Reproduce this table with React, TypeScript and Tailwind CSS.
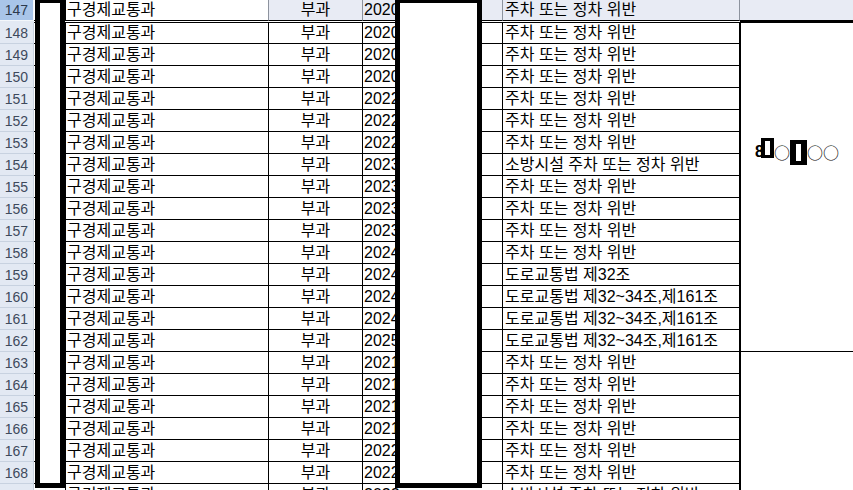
import React from "react";

type Row = { n: number; year: string; reason: string };

const rows: Row[] = [
  { n: 148, year: "2020", reason: "주차 또는 정차 위반" },
  { n: 149, year: "2020", reason: "주차 또는 정차 위반" },
  { n: 150, year: "2020", reason: "주차 또는 정차 위반" },
  { n: 151, year: "2022", reason: "주차 또는 정차 위반" },
  { n: 152, year: "2022", reason: "주차 또는 정차 위반" },
  { n: 153, year: "2022", reason: "주차 또는 정차 위반" },
  { n: 154, year: "2023", reason: "소방시설 주차 또는 정차 위반" },
  { n: 155, year: "2023", reason: "주차 또는 정차 위반" },
  { n: 156, year: "2023", reason: "주차 또는 정차 위반" },
  { n: 157, year: "2023", reason: "주차 또는 정차 위반" },
  { n: 158, year: "2024", reason: "주차 또는 정차 위반" },
  { n: 159, year: "2024", reason: "도로교통법 제32조" },
  { n: 160, year: "2024", reason: "도로교통법 제32~34조,제161조" },
  { n: 161, year: "2024", reason: "도로교통법 제32~34조,제161조" },
  { n: 162, year: "2025", reason: "도로교통법 제32~34조,제161조" },
  { n: 163, year: "2021", reason: "주차 또는 정차 위반" },
  { n: 164, year: "2021", reason: "주차 또는 정차 위반" },
  { n: 165, year: "2021", reason: "주차 또는 정차 위반" },
  { n: 166, year: "2021", reason: "주차 또는 정차 위반" },
  { n: 167, year: "2022", reason: "주차 또는 정차 위반" },
  { n: 168, year: "2022", reason: "주차 또는 정차 위반" },
  { n: 169, year: "2022", reason: "소방시설 주차 또는 정차 위반" },
];

const cell = "flex items-center overflow-hidden whitespace-nowrap border-b border-r border-black";
const rowHead =
  "flex items-center justify-end border-b border-r border-[#c8d2e0] bg-[#e3e9f3] pr-[5px] text-[14px] text-[#3e4a5c]";

function DataRow({ r }: { r: Row }) {
  return (
    <>
      <div className={rowHead}>{r.n}</div>
      <div className={cell} />
      <div className={`${cell} pl-[1px]`}>구경제교통과</div>
      <div className={`${cell} justify-center`}>부과</div>
      <div className={`${cell} pl-[1px]`}>{r.year}</div>
      <div className={`${cell} pl-[2px]`}>{r.reason}</div>
    </>
  );
}

function Masked() {
  return (
    <div className="flex flex-col items-center pt-[116px]">
      <div className="flex h-[26px] items-center text-[16px] text-black">
        <span className="font-bold">8</span>
        <span className="-ml-[3px] mb-[9px] inline-block h-[20px] w-[13px] border-x-[4px] border-y-[3px] border-black bg-white" />
        <span className="font-['Noto_Sans_CJK_KR',sans-serif]">○</span>
        <span className="inline-block h-[25px] w-[17px] border-x-[6px] border-y-[4px] border-black bg-white" />
        <span className="font-['Noto_Sans_CJK_KR',sans-serif]">○○</span>
      </div>
    </div>
  );
}

export default function App() {
  const first = rows.slice(0, 15);
  const second = rows.slice(15);

  return (
    <div className="relative h-[490px] w-[853px] overflow-hidden bg-white font-['Liberation_Sans','Noto_Sans_CJK_KR',sans-serif] text-[16px] leading-[20px] text-black">
      <div className="grid grid-cols-[34px_32px_203px_94px_140px_237px_1fr] grid-rows-[21px_2px_21px_repeat(21,22px)]">
        {/* row 147 (selected) */}
        <div className="flex items-center justify-end border-b border-r border-[#f4f7fb] bg-[#a9c5e9] pr-[5px] text-[14px] text-[#2c3a4d]">
          147
        </div>
        <div className="border-b border-r border-black" />
        <div className="flex items-center border-b border-r border-b-black border-r-[#8d939e] pl-[1px]">구경제교통과</div>
        <div className="flex items-center justify-center border-b border-r border-b-black border-r-[#8d939e] bg-[#e8ebf4]">부과</div>
        <div className="flex items-center border-b border-r border-b-black border-r-[#8d939e] bg-[#e8ebf4] pl-[1px]">2020</div>
        <div className="flex items-center border-b border-r border-b-black border-r-[#8d939e] bg-[#e8ebf4] pl-[2px]">
          주차 또는 정차 위반
        </div>
        <div className="border-b border-black bg-[#e8ebf4]" />

        {/* freeze line */}
        <div className="bg-[#e3e9f3]" />
        <div className="border-b border-black bg-white" />
        <div className="border-b border-black bg-white" />
        <div className="border-b border-black bg-white" />
        <div className="border-b border-black bg-white" />
        <div className="border-b border-black bg-white" />
        <div className="bg-black" />

        {first.map((r, i) => (
          <React.Fragment key={r.n}>
            <DataRow r={r} />
            {i === 0 && (
              <div className="row-span-15 border-b border-l border-black">
                <Masked />
              </div>
            )}
          </React.Fragment>
        ))}
        {second.map((r, i) => (
          <React.Fragment key={r.n}>
            <DataRow r={r} />
            {i === 0 && <div className="row-span-7 border-l border-black" />}
          </React.Fragment>
        ))}
      </div>

      {/* redaction boxes */}
      <div className="absolute left-[35px] top-[-2px] h-[490px] w-[30px] border-[5px] border-black bg-white" />
      <div className="absolute left-[395px] top-[-2px] h-[490px] w-[87px] border-[5px] border-black bg-white" />
    </div>
  );
}
